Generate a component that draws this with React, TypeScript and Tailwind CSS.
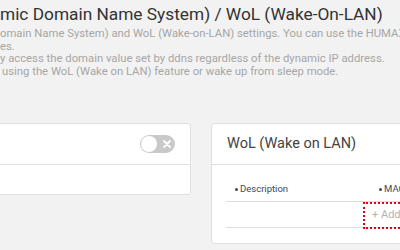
import React from "react";

const Toggle = () => (
  <div className="w-[35px] h-[18px] rounded-full bg-[#c9c9c9] flex items-center">
    <div className="ml-[1px] w-[16px] h-[16px] rounded-full bg-white" />
    <svg className="ml-[6px]" width="8" height="8" viewBox="0 0 8 8">
      <path d="M1 1 L7 7 M7 1 L1 7" stroke="#fff" strokeWidth="1.8" strokeLinecap="round" />
    </svg>
  </div>
);

export default function App() {
  return (
    <div
      className="w-[400px] h-[250px] overflow-hidden bg-[#f2f2f2]"
      style={{ fontFamily: "Roboto, 'Liberation Sans', sans-serif" }}
    >
      {/* Page heading */}
      <div className="pt-[4px] whitespace-nowrap">
        <h1 className="text-[17.3px] leading-[20px] text-[#333333]">
          mic Domain Name System) / WoL (Wake-On-LAN)
        </h1>
        <div className="mt-[4px] text-[11.3px] leading-[12.5px] text-[#a6a6a6]">
          <p>omain Name System) and WoL (Wake-on-LAN) settings. You can use the HUMAX</p>
          <p>es.</p>
          <p>y access the domain value set by ddns regardless of the dynamic IP address.</p>
          <p className="pl-[2px]">using the WoL (Wake on LAN) feature or wake up from sleep mode.</p>
        </div>
      </div>

      <div className="mt-[45px] ml-[-150px] flex items-start gap-[20px]">
        {/* DDNS card */}
        <div className="w-[341px] shrink-0 bg-white border border-[#e0e0e0] rounded-[3px]">
          <div className="h-[41px] flex items-center justify-end pr-[15px] border-b border-[#e0e0e0]">
            <Toggle />
          </div>
          <div className="h-[29px]" />
        </div>

        {/* WoL card */}
        <div className="w-[320px] shrink-0 bg-white border border-[#e0e0e0] rounded-[3px]">
          <div className="h-[41px] flex items-center pl-[15px] border-b border-[#e0e0e0]">
            <h2 className="text-[14.5px] text-[#444444]">WoL (Wake on LAN)</h2>
          </div>
          <div className="pl-[14px] pb-[15px]">
            <div className="flex pt-[17px] pb-[5px] border-b border-[#dddddd] text-[9.5px] leading-[14px] text-[#3b4a5e]">
              <div className="w-[137px] pl-[9px] flex items-center gap-[2px]">
                <span className="w-[3px] h-[3px] rounded-full bg-[#3b4a5e]" />
                Description
              </div>
              <div className="pl-[16px] flex items-center gap-[2px]">
                <span className="w-[3px] h-[3px] rounded-full bg-[#3b4a5e]" />
                MAC Address
              </div>
            </div>
            <div className="flex h-[26px] border-b border-[#dddddd]">
              <div className="w-[137px]" />
              <div className="w-[100px] h-[27px] border-2 border-dotted border-[#e60012] flex items-center pl-[7px] text-[11px] text-[#b3b3b3]">
                + Add
              </div>
            </div>
          </div>
        </div>
      </div>
    </div>
  );
}
